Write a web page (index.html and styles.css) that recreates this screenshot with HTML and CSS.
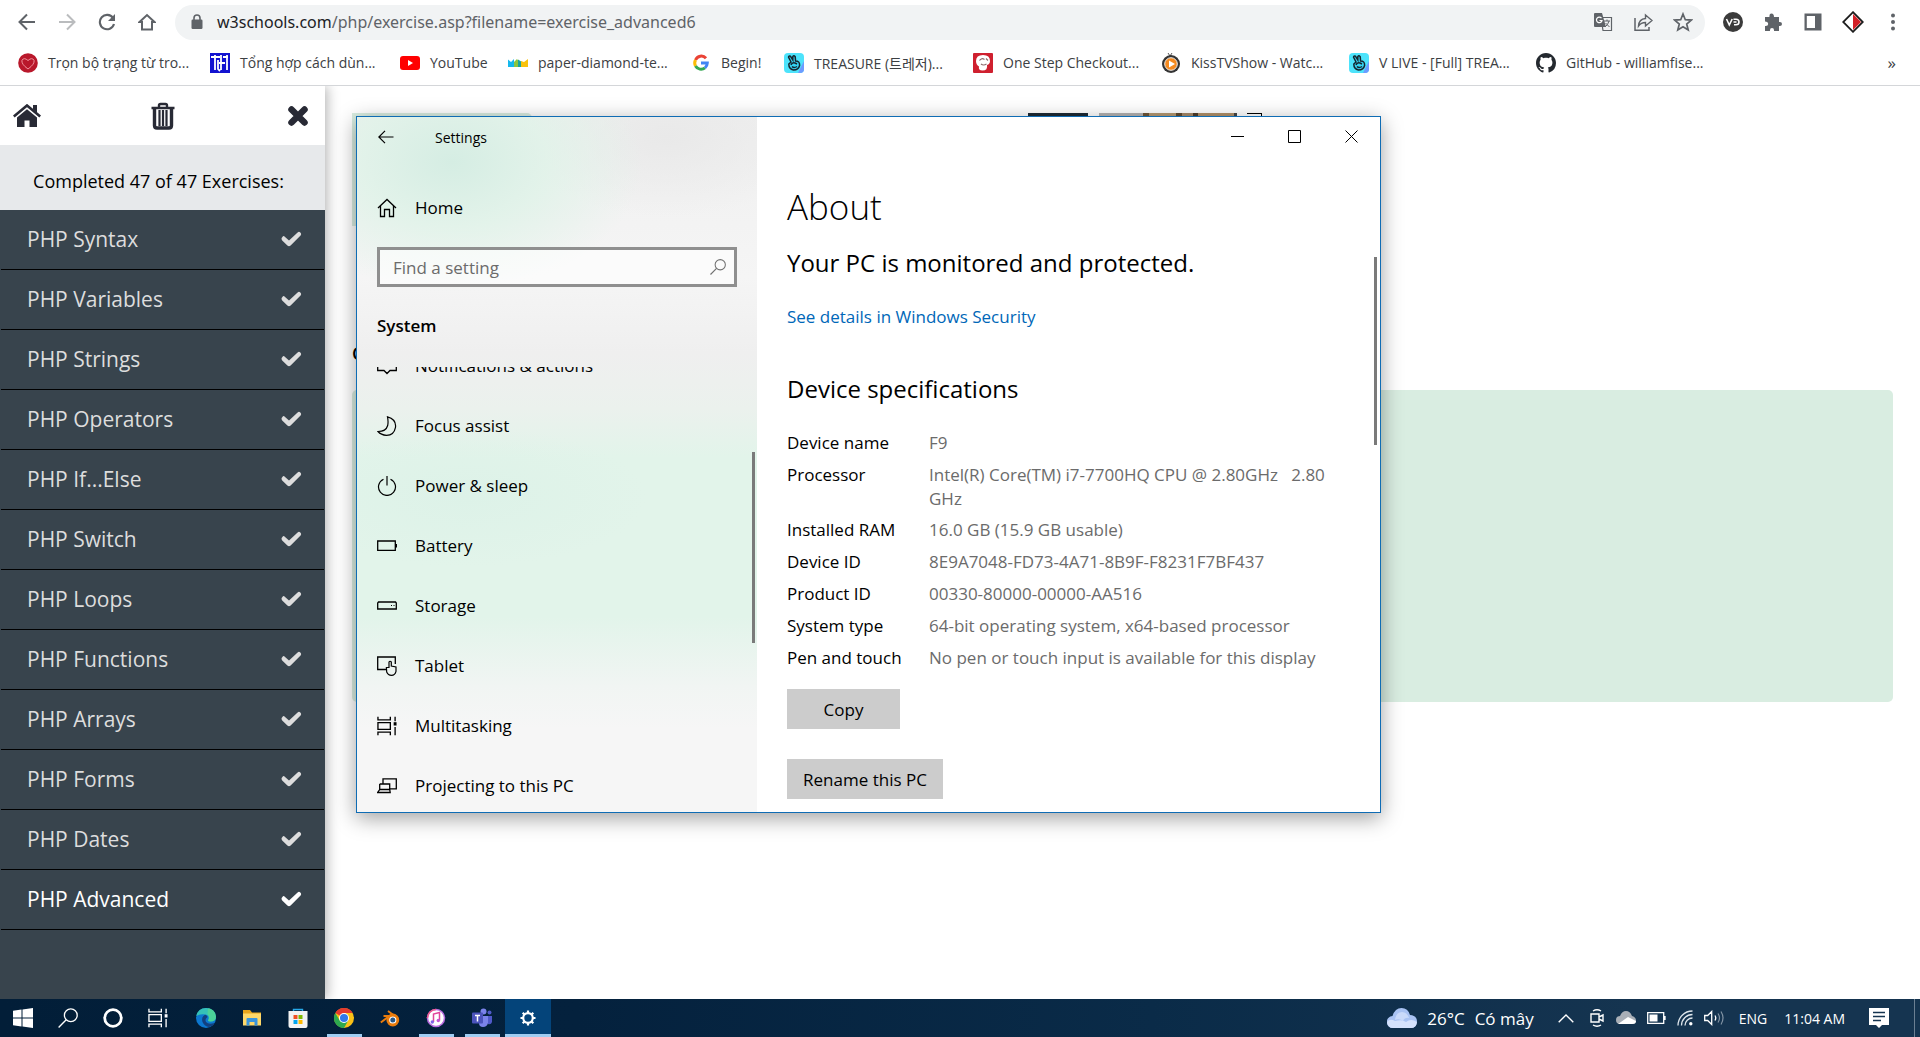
FILE: index.html
```html
<!DOCTYPE html>
<html lang="en">
<head>
<meta charset="utf-8">
<title>PHP Exercises</title>
<link rel="stylesheet" href="styles.css">
</head>
<body>
<svg class="defs" width="0" height="0" aria-hidden="true">
  <symbol id="check" viewBox="0 0 21 16"><path d="M3.2 5.2 8 9.6 16.6 1.4Q18 .2 19.300 1.400Q20.800 3 19.600 4.400L9.600 14.400Q8 16 6.400 14.400L1.200 9.400Q-.2 7.800 1.200 6.200Q2.400 4.600 3.200 5.200Z" fill="currentColor"/></symbol>
  <symbol id="vlive" viewBox="0 0 20 20"><rect width="20" height="20" rx="4" fill="#4de3fb"/><path d="M14 20h2a4 4 0 0 0 4-4V8Z" fill="#6d9bff"/><g fill="#35d4f3" stroke="#15252e" stroke-width="1.500"><path d="M7 9 4.500 4.200Q4.600 2.400 6.400 3.200L8.800 7V3.600Q9.800 1.800 11.200 3.600L11.600 8Q16 8 15.600 12.500Q14.500 17 9.500 17Q4.800 16 4.800 11Z"/><path d="M7 12Q8 9 11 10l2 1M8 13.500q2 2 5 0" fill="none"/></g></symbol>
  <symbol id="taskview" viewBox="0 0 21 20"><path d="M1 0v3.500h13V0M1 20v-3.500h13V20M1 6.500h13v7H1ZM19 0v5M19 11v9" fill="none" stroke="currentColor" stroke-width="1.400"/><rect x="17.500" y="6" width="3" height="3.500" fill="currentColor"/></symbol>
  <symbol id="search" viewBox="0 0 20 20"><circle cx="12.800" cy="7.200" r="6.400" fill="none" stroke="currentColor" stroke-width="1.300"/><path d="M8.200 11.800.6 19.400" stroke="currentColor" stroke-width="1.400"/></symbol>
</svg>

<header class="browser">
  <div class="toolbar">
    <nav class="nav-buttons" aria-label="Navigation">
      <button aria-label="Back"><svg width="18" height="18" viewBox="0 0 18 18"><path d="M17 9H2M9 1.500 1.500 9 9 16.500" fill="none" stroke="#5f6368" stroke-width="2"/></svg></button>
      <button aria-label="Forward"><svg width="18" height="18" viewBox="0 0 18 18"><path d="M1 9h15M9 1.500 16.500 9 9 16.500" fill="none" stroke="#babcbe" stroke-width="2"/></svg></button>
      <button aria-label="Reload"><svg width="18" height="18" viewBox="0 0 18 18"><path d="M15 5A7.200 7.200 0 1 0 16 11" fill="none" stroke="#5f6368" stroke-width="2.100"/><path d="M17 1v7h-7Z" fill="#5f6368"/></svg></button>
      <button aria-label="Home page"><svg width="18" height="18" viewBox="0 0 18 18"><path d="M1.500 9 9 2l7.500 7H14v7.500H4V9Z" fill="none" stroke="#5f6368" stroke-width="2"/></svg></button>
    </nav>
    <div class="omnibox">
      <svg width="12" height="16" viewBox="0 0 12 16"><path d="M3 6V4a3 3 0 0 1 6 0v2" fill="none" stroke="#5f6368" stroke-width="1.600"/><rect x=".5" y="5.500" width="11" height="9.500" rx="1.200" fill="#5f6368"/></svg>
      <p class="url"><span class="host">w3schools.com</span>/php/exercise.asp?filename=exercise_advanced6</p>
      <button aria-label="Translate"><svg width="20" height="20" viewBox="0 0 20 20"><path d="M8 5.500h10.500v13H10Z" fill="none" stroke="#5f6368" stroke-width="1.200"/><path d="M2 1h7l4 14H2Q1 15 1 14V2Q1 1 2 1Z" fill="#5f6368"/><path d="M8.500 6.200A2.800 2.800 0 1 0 9 8.500H6.500" fill="none" stroke="#fff" stroke-width="1.200"/><path d="M11 9h6M14 7.500V9M16 9q-1 4-4 6M12.500 11l4 4" fill="none" stroke="#5f6368"/></svg></button>
      <button aria-label="Share"><svg width="20" height="20" viewBox="0 0 20 20"><path d="M2 6v12.200h14V15" fill="none" stroke="#5f6368" stroke-width="1.500"/><path d="M5.500 14Q6 7 12.500 6.500V3L19 8.500 12.500 14v-3.500Q8 10.500 5.500 14Z" fill="none" stroke="#5f6368" stroke-width="1.400"/></svg></button>
      <button aria-label="Bookmark this page"><svg width="20" height="20" viewBox="0 0 20 20"><path d="m10 2 2.300 5.700 6 .4-4.600 3.900 1.500 6L10 14.700 4.800 18l1.500-6-4.600-3.900 6-.4Z" fill="none" stroke="#5f6368" stroke-width="1.700"/></svg></button>
    </div>
    <div class="extensions">
      <button aria-label="Video downloader"><svg width="20" height="20" viewBox="0 0 20 20"><circle cx="10" cy="10" r="10" fill="#3b3b3b"/><path d="m3.500 7 2.800 6 2.900-6M10.500 7.200H13q3 0 3 2.800t-3 2.800h-2M10.500 10h3" fill="none" stroke="#fff" stroke-width="1.600"/></svg></button>
      <button aria-label="Extensions"><svg width="20" height="20" viewBox="0 0 20 20"><path d="M2 5h4.500Q6 1.500 8.500 1.500T11 5h5v5q3-.5 3 2t-3 2v5h-5q.3-3-2-3t-2 3H2v-5q3.200.3 3.200-2T2 9.500Z" fill="#5f6368"/></svg></button>
      <button aria-label="Side panel"><svg width="20" height="20" viewBox="0 0 20 20"><path d="M1.500 1.500h17v17h-17ZM3.800 4v12H12V4Z" fill="#5f6368" fill-rule="evenodd"/></svg></button>
      <button aria-label="Profile"><svg width="22" height="22" viewBox="0 0 22 22"><path d="m11 1.200 9.800 9.800-9.800 9.800L1.200 11Z" fill="#fff" stroke="#1c1c1c" stroke-width="1.800"/><path d="m11 3 8 8-8 8Z" fill="#d21f26"/></svg></button>
      <button aria-label="Menu"><svg width="20" height="20" viewBox="0 0 20 20" fill="#5f6368"><circle cx="10" cy="3.500" r="2"/><circle cx="10" cy="10" r="2"/><circle cx="10" cy="16.500" r="2"/></svg></button>
    </div>
  </div>
  <nav class="bookmarks" aria-label="Bookmarks">
    <a href="#"><svg viewBox="0 0 20 20"><circle cx="10" cy="10" r="9.800" fill="#b9182b"/><path d="M10 16Q3 11 4 7.200Q6 4 10 7.500Q14 4 16 7.200Q17 11 10 16Z" fill="none" stroke="#f0929c"/></svg>Trọn bộ trạng từ tro...</a>
    <a href="#"><svg viewBox="0 0 20 20"><rect width="20" height="20" fill="#1212d0"/><path d="M1 4h9M5 2v15M8 7v9l2 2M9 10h6M11 2v15M17 2v15M13 4h5" fill="none" stroke="#fff" stroke-width="1.800"/></svg>Tổng hợp cách dùn...</a>
    <a href="#"><svg viewBox="0 0 20 20"><rect y="3" width="20" height="14" rx="3" fill="#f00"/><path d="m8 7 5 3-5 3Z" fill="#fff"/></svg>YouTube</a>
    <a href="#"><svg viewBox="0 0 20 20"><path d="M0 6.500 3 9l3-3v8H0Z" fill="#15b8ed"/><path d="m6 9 3-3 3 4v4H6Z" fill="#8bc53f"/><path d="M10 6.500 14 9v5h-4Z" fill="#1ba49b"/><path d="m13 8 3 1 4-3v8h-7Z" fill="#f9c20b"/></svg>paper-diamond-te...</a>
    <a href="#"><svg viewBox="0 0 20 20" fill="none" stroke-width="3"><path d="M15 5.200A6.300 6.300 0 0 0 4.500 7" stroke="#ea4335"/><path d="M4.500 7a6.300 6.300 0 0 0 0 6" stroke="#fbbc05"/><path d="M4.500 13A6.300 6.300 0 0 0 14 14.800" stroke="#34a853"/><path d="M10 10h6.300Q16.200 13 14 14.800" stroke="#4285f4"/></svg>Begin!</a>
    <a href="#"><svg viewBox="0 0 20 20"><use href="#vlive"/></svg>TREASURE (트레저)...</a>
    <a href="#"><svg viewBox="0 0 20 20"><rect width="20" height="20" rx="1" fill="#cf202f"/><path d="M3 8Q3 2 10 2t7 6q0 3-3 4 1 5.500-4.500 5.500-4.500 0-3.500-4-3-2-3-5.500Z" fill="#fff"/><path d="M6.500 7.500q2-3 5-1M13 5.500l2 2M8 11q2.500 2 5.500 0" fill="none" stroke="#8c6a6c" stroke-width="1.200"/></svg>One Step Checkout...</a>
    <a href="#"><svg viewBox="0 0 20 20"><path d="m7 0 2 3 2-3" fill="none" stroke="#555"/><circle cx="10" cy="11" r="9" fill="#343434"/><circle cx="10" cy="11" r="6.300" fill="#f58a1f" stroke="#eee"/><path d="m8 7.500 6 3.500-6 3.500Z" fill="#fff"/></svg>KissTVShow - Watc...</a>
    <a href="#"><svg viewBox="0 0 20 20"><use href="#vlive"/></svg>V LIVE - [Full] TREA...</a>
    <a href="#"><svg viewBox="0 0 16 16"><path fill="#24292f" d="M8 0C3.580 0 0 3.580 0 8c0 3.540 2.290 6.530 5.470 7.590.4.070.55-.17.55-.38 0-.19-.01-.82-.01-1.490-2.010.37-2.530-.49-2.690-.94-.09-.23-.48-.94-.82-1.130-.28-.15-.68-.52-.01-.53.63-.01 1.080.58 1.230.82.72 1.210 1.870.87 2.330.66.070-.52.280-.87.510-1.070-1.780-.2-3.640-.89-3.640-3.950 0-.87.310-1.590.82-2.150-.08-.2-.36-1.020.08-2.120 0 0 .67-.21 2.200.82.640-.18 1.320-.27 2-.27s1.360.09 2 .27c1.530-1.040 2.200-.82 2.200-.82.440 1.100.16 1.920.08 2.120.51.560.82 1.270.82 2.150 0 3.070-1.870 3.750-3.650 3.950.29.250.54.730.54 1.480 0 1.070-.01 1.930-.01 2.200 0 .21.150.46.550.38A8.010 8.010 0 0 0 16 8c0-4.420-3.580-8-8-8Z"/></svg>GitHub - williamfise...</a>
    <button class="more" aria-label="More bookmarks">»</button>
  </nav>
</header>

<main class="page">
  <aside class="sidebar">
    <div class="side-tools">
      <button aria-label="Home"><svg width="28" height="24" viewBox="0 0 28 24"><path d="m.8 12.500 13.200-11 13.200 11" fill="none" stroke="#282a35" stroke-width="2.600"/><path d="M20 1h4v8l-4-3.500ZM4 13.500 14 5.200l10 8.300V23h-7.500v-6.500h-5V23H4Z" fill="#282a35"/></svg></button>
      <button aria-label="Reset progress"><svg width="24" height="28" viewBox="0 0 24 28"><path d="M8 5V3.500Q8 2 9.500 2h5Q16 2 16 3.500V5M.5 6h23" fill="none" stroke="#282a35" stroke-width="2.400"/><path d="M3.500 6v17.500Q3.500 26 6 26h12q2.500 0 2.500-2.500V6" fill="none" stroke="#282a35" stroke-width="3.400"/><path d="M8.500 8v16M12 8v16M15.500 8v16" stroke="#282a35" stroke-width="2.200"/></svg></button>
      <button aria-label="Close menu"><svg width="22" height="22" viewBox="0 0 22 22"><path d="m4.500 4.500 13 13M17.500 4.500l-13 13" stroke="#282a35" stroke-width="6.500" stroke-linecap="round"/></svg></button>
    </div>
    <p class="completed">Completed 47 of 47 Exercises:</p>
    <nav class="chapters" aria-label="Exercises">
      <a href="#">PHP Syntax<svg><use href="#check"/></svg></a>
      <a href="#">PHP Variables<svg><use href="#check"/></svg></a>
      <a href="#">PHP Strings<svg><use href="#check"/></svg></a>
      <a href="#">PHP Operators<svg><use href="#check"/></svg></a>
      <a href="#">PHP If...Else<svg><use href="#check"/></svg></a>
      <a href="#">PHP Switch<svg><use href="#check"/></svg></a>
      <a href="#">PHP Loops<svg><use href="#check"/></svg></a>
      <a href="#">PHP Functions<svg><use href="#check"/></svg></a>
      <a href="#">PHP Arrays<svg><use href="#check"/></svg></a>
      <a href="#">PHP Forms<svg><use href="#check"/></svg></a>
      <a href="#">PHP Dates<svg><use href="#check"/></svg></a>
      <a href="#" class="current">PHP Advanced<svg><use href="#check"/></svg></a>
    </nav>
  </aside>
  <section class="exercise">
    <div class="hero">
      <div class="notice"></div>
      <div class="promo"><span class="promo-dark"></span><span class="promo-photo"></span><span class="promo-mark"></span></div>
    </div>
    <h2 class="result-title">C</h2>
    <div class="result"></div>
  </section>
</main>

<section class="window" aria-label="Settings">
  <div class="pane">
    <div class="pane-title">
      <button aria-label="Back"><svg width="16" height="14" viewBox="0 0 16 14"><path d="M15.500 7H1M7 .8.8 7 7 13.200" fill="none" stroke="#000" stroke-width="1.200"/></svg></button>
      <span>Settings</span>
    </div>
    <a class="item home" href="#"><svg viewBox="0 0 20 20"><path d="M1 10 10 1.500 19 10M3.500 8v10.500h4v-7h5v7h4V8" fill="none" stroke="#000" stroke-width="1.300"/></svg>Home</a>
    <label class="find"><input type="text" placeholder="Find a setting" aria-label="Find a setting"><svg width="16" height="16"><use href="#search"/></svg></label>
    <h2 class="group">System</h2>
    <div class="list">
      <nav class="items" aria-label="System settings">
        <a class="item" href="#"><svg viewBox="0 0 20 20"><path d="M.7 2h18.600v12.500H13L10 17.500 7 14.500H.7Z" fill="none" stroke="#000" stroke-width="1.300"/></svg>Notifications &amp; actions</a>
        <a class="item" href="#"><svg viewBox="0 0 20 20"><path d="M10.500.8q9 2.500 8 10.500-1.500 8-9 8Q4 19 1 15.500q8 0 9.700-6 .8-4-.2-8.700Z" fill="none" stroke="#000" stroke-width="1.200"/></svg>Focus assist</a>
        <a class="item" href="#"><svg viewBox="0 0 20 20"><path d="M6.500 3.200a8.500 8.500 0 1 0 7 0M10 0v9.500" fill="none" stroke="#000" stroke-width="1.200"/></svg>Power &amp; sleep</a>
        <a class="item" href="#"><svg viewBox="0 0 20 20"><path d="M.7 5h17.600v9.300H.7ZM19.500 8v3.500" fill="none" stroke="#000" stroke-width="1.300"/></svg>Battery</a>
        <a class="item" href="#"><svg viewBox="0 0 20 20"><path d="M1.500 6h17l.8 1v6H.7V7Z" fill="none" stroke="#000" stroke-width="1.300"/><path d="M14 9h1v1h-1ZM16.500 9h1v1h-1Z"/></svg>Storage</a>
        <a class="item" href="#"><svg viewBox="0 0 20 20"><path d="M9 13.500H.7V1h17.600v7" fill="none" stroke="#000" stroke-width="1.300"/><path d="M12 12V6q1-1.500 2.300 0v4l4.700 1v4.300Q18 19.300 14.500 19.300T9.700 16l-.3-4.500H12" fill="none" stroke="#000" stroke-width="1.200"/></svg>Tablet</a>
        <a class="item" href="#"><svg viewBox="0 0 21 20"><use href="#taskview"/></svg>Multitasking</a>
        <a class="item" href="#"><svg viewBox="0 0 20 20"><path d="M6 8V2.800h13.300v10H12M2.700 8h10v5.500M2.700 8v5.500L.6 16.500h12.600l-.5-3h-10" fill="none" stroke="#000" stroke-width="1.300"/></svg>Projecting to this PC</a>
      </nav>
      <span class="scroll list-scroll"></span>
    </div>
  </div>
  <div class="about">
    <div class="controls">
      <button aria-label="Minimize"><svg width="13" height="13"><path d="M0 6.500h13" stroke="#000"/></svg></button>
      <button aria-label="Maximize"><svg width="13" height="13"><path d="M.5.500h12v12H.5Z" fill="none" stroke="#000"/></svg></button>
      <button aria-label="Close"><svg width="13" height="13"><path d="m.5.500 12 12M12.500.500l-12 12" stroke="#000"/></svg></button>
    </div>
    <div class="about-body">
      <h1>About</h1>
      <h2 class="status">Your PC is monitored and protected.</h2>
      <a class="security" href="#">See details in Windows Security</a>
      <h2 class="specs-title">Device specifications</h2>
      <table class="specs">
        <tr><th scope="row">Device name</th><td>F9</td></tr>
        <tr><th scope="row">Processor</th><td>Intel(R) Core(TM) i7-7700HQ CPU @ 2.80GHz &nbsp; 2.80 GHz</td></tr>
        <tr><th scope="row">Installed RAM</th><td>16.0 GB (15.9 GB usable)</td></tr>
        <tr><th scope="row">Device ID</th><td>8E9A7048-FD73-4A71-8B9F-F8231F7BF437</td></tr>
        <tr><th scope="row">Product ID</th><td>00330-80000-00000-AA516</td></tr>
        <tr><th scope="row">System type</th><td>64-bit operating system, x64-based processor</td></tr>
        <tr><th scope="row">Pen and touch</th><td>No pen or touch input is available for this display</td></tr>
      </table>
      <button class="action copy">Copy</button>
      <button class="action rename">Rename this PC</button>
    </div>
    <span class="scroll about-scroll"></span>
  </div>
</section>

<footer class="taskbar">
  <div class="apps">
    <button aria-label="Start"><svg viewBox="0 0 20 20"><path d="M0 2.800 8.500 1.600v7.900H0ZM9.500 1.500 20 0v9.500H9.500ZM0 10.500h8.500v7.900L0 17.200ZM9.500 10.500H20V20L9.500 18.500Z" fill="#fff"/></svg></button>
    <button aria-label="Search"><svg viewBox="0 0 20 20"><use href="#search"/></svg></button>
    <button aria-label="Cortana"><svg viewBox="0 0 20 20"><circle cx="10" cy="10" r="8.300" fill="none" stroke="#fff" stroke-width="2.800"/></svg></button>
    <button aria-label="Task view"><svg viewBox="0 0 21 20"><use href="#taskview"/></svg></button>
    <button class="app" aria-label="Edge"><svg viewBox="0 0 20 20"><circle cx="10" cy="10" r="10" fill="#0c78d0"/><path d="M.3 8Q2 0 10 0q9 0 10 8.500 0 5-5.500 5-3.500 0-2-2 1-4-3-5Q4 5.500.3 8Z" fill="#35c1b8"/><path d="M12 0.300q7 1 8 8.200 0 5-5.500 5-3.500 0-2-2 1.500-3-1-5.500Z" fill="#55d98a" opacity=".7"/><path d="M9 6.700Q5 9 6.500 14q2 4.500 6.500 5 4-1 5.500-4-6 2-8.500-1-1.500-3 1.500-5Q11 7 9 6.700Z" fill="#12407f"/></svg></button>
    <button class="app" aria-label="File Explorer"><svg viewBox="0 0 20 20"><path d="M1 2h7l2 2.500h9V17H1Z" fill="#e9a51c"/><path d="M1 5.500h18v12H1Z" fill="#ffd869"/><path d="M4.500 17.500V11q0-1 1-1h9q1 0 1 1v6.500h-3V14h-5v3.500Z" fill="#3a95dd"/></svg></button>
    <button class="app" aria-label="Store"><svg viewBox="0 0 20 20"><path d="M5.500 5V1.500h9V5" fill="none" stroke="#27a9e8" stroke-width="1.400"/><path d="M.5 3h19v15q0 2-2 2h-15q-2 0-2-2Z" fill="#f3f3f3"/><path d="M5.500 7h4v4h-4Z" fill="#f25022"/><path d="M10.500 7h4v4h-4Z" fill="#7fba00"/><path d="M5.500 12h4v4h-4Z" fill="#00a4ef"/><path d="M10.500 12h4v4h-4Z" fill="#ffb900"/></svg></button>
    <button class="app running" aria-label="Chrome"><svg viewBox="0 0 20 20"><circle cx="10" cy="10" r="10" fill="#fbc116"/><path d="M10 10 1.300 5A10 10 0 0 1 18.700 5H10Z" fill="#e33b2e"/><path d="M1.300 5A10 10 0 0 0 10 20l4.300-7.500L5.700 12.500Z" fill="#2da94f"/><circle cx="10" cy="10" r="5" fill="#fff"/><circle cx="10" cy="10" r="4" fill="#3079ea"/></svg></button>
    <button class="app" aria-label="Blender"><svg viewBox="0 0 20 20"><path d="m.8 14.500 8.500-6.500H3.500m4.500-5 8 6" fill="none" stroke="#ea7c0c" stroke-width="2"/><circle cx="12.800" cy="12" r="5" fill="#fff" stroke="#ea7c0c" stroke-width="2.800"/><circle cx="12.800" cy="12" r="2.500" fill="#265787"/></svg></button>
    <button class="app running" aria-label="iTunes"><svg viewBox="0 0 20 20"><circle cx="10" cy="10" r="8.500" fill="#fff" stroke="#b76be0" stroke-width="1.500"/><path d="M1.500 10A8.500 8.500 0 0 1 10 1.500" fill="none" stroke="#f25a8b" stroke-width="1.500"/><path d="M7.500 14V6l6-1.500v8" fill="none" stroke="#e0459b" stroke-width="1.500"/><circle cx="6.300" cy="14" r="1.700" fill="#7f63e8"/><circle cx="12.300" cy="12.500" r="1.700" fill="#c355d6"/></svg></button>
    <button class="app running" aria-label="Teams"><svg viewBox="0 0 20 20"><circle cx="11.500" cy="3.500" r="3" fill="#7b83eb"/><circle cx="17.500" cy="4.500" r="2" fill="#5059c9"/><path d="M14 8h6v6q-1 3-4 2Z" fill="#5059c9"/><path d="M7 8h9v7q-1 4-5 4t-4-4Z" fill="#7b83eb"/><rect y="4.500" width="11" height="11" rx="1" fill="#4b53bc"/><path d="M3 7.500h5M5.500 7.500v6" stroke="#fff" stroke-width="1.500"/></svg></button>
    <button class="app running active" aria-label="Settings"><svg viewBox="0 0 20 20"><circle cx="10" cy="10" r="4.800" fill="none" stroke="#fff" stroke-width="2.200"/><path d="M10 2.500v3M10 14.500v3M2.500 10h3M14.500 10h3M4.700 4.700l2 2M13.300 13.300l2 2M4.700 15.300l2-2M13.300 6.700l2-2" stroke="#fff" stroke-width="2.200"/></svg></button>
  </div>
  <div class="tray">
    <button class="weather"><svg width="30" height="20" viewBox="0 0 30 20"><path d="M6 20a6 6 0 0 1-.5-12Q8 0 14.500 0t8.500 7q7 .5 7 6.500T24 20Z" fill="#a9c3f3"/><path d="M8 12Q9 4 15 4q5 0 7 6-4-1-6 3-4-3-8-1Z" fill="#c9dafa"/><path d="M0 14q3-4 8-1 7-2 11 1 5-4 11 0-1 6-6 6H6q-5 0-6-6Z" fill="#d5e2fc"/></svg><span>26°C</span><span>Có mây</span></button>
    <button aria-label="Show hidden icons"><svg width="16" height="9" viewBox="0 0 16 9"><path d="M.7 8.300 8 1l7.300 7.300" fill="none" stroke="#fff" stroke-width="1.400"/></svg></button>
    <div class="indicators">
      <svg width="16" height="18" viewBox="0 0 16 18"><path d="M2 5h8v8H2ZM10 8l4-2v6l-4-2M4 2q4-2.500 8 0M4 16q4 2.500 8 0" fill="none" stroke="#fff" stroke-width="1.400"/></svg>
      <svg width="20" height="14" viewBox="0 0 20 14"><path d="M4 13a4 4 0 0 1 0-8Q6 0 10 0t6 5q4 1 4 4.500T17 13Z" fill="#a9afb7"/><path d="M2 13 12 6l8 4q0 3-4 3Z" fill="#fff"/></svg>
      <svg width="19" height="12" viewBox="0 0 19 12"><path d="M.7.700h16v10.600H.7ZM18 4v4" fill="none" stroke="#fff" stroke-width="1.300"/><path d="M2.500 2.500h8v7h-8Z" fill="#fff"/></svg>
      <svg width="16" height="16" viewBox="0 0 16 16"><g fill="none" stroke="#dfe6ec" stroke-width="1.300"><path d="M1 15.500A14.500 14.500 0 0 1 15.500 1"/><path d="M4.500 15.500a11 11 0 0 1 11-11"/><path d="M8 15.500A7.500 7.500 0 0 1 15.500 8"/></g><circle cx="13.800" cy="13.800" r="1.700" fill="#fff"/></svg>
      <svg width="21" height="16" viewBox="0 0 21 16"><path d="M.7 5.500h3l4-4v13l-4-4h-3ZM11 5.500q1.500 2.500 0 5" fill="none" stroke="#fff" stroke-width="1.300"/><path d="M14 3.500q3 4.500 0 9M17 1.500q4 6.500 0 13" fill="none" stroke="#8394a5" stroke-width="1.200"/></svg>
    </div>
    <span class="lang">ENG</span>
    <time>11:04 AM</time>
    <button class="notes" aria-label="Notifications"><svg width="20" height="20" viewBox="0 0 20 20"><path d="M0 0h20v17h-7l-3 3-3-3H0Z" fill="#fff"/><path d="M4 4.500h12M4 8.500h12M4 12.500h8" stroke="#153450" stroke-width="1.400"/></svg></button>
  </div>
</footer>
</body>
</html>
```
FILE: styles.css
```css
* { box-sizing: border-box; }
body {
  margin: 0;
  height: 100vh;
  display: flex;
  flex-direction: column;
  overflow: hidden;
  background: #fff;
  color: #000;
  font-family: "Open Sans", "Noto Sans", "Noto Sans CJK KR", sans-serif;
  font-size: 17px;
}
h1, h2, p { margin: 0; font-weight: 400; }
a { color: inherit; text-decoration: none; }
button {
  display: flex;
  align-items: center;
  justify-content: center;
  margin: 0;
  padding: 0;
  border: 0;
  background: none;
  color: inherit;
  font: inherit;
}
svg { display: block; flex: none; }
.defs { position: absolute; }

/* Browser chrome */
.browser { position: relative; z-index: 1; height: 86px; border-bottom: 1px solid #d4d6d9; background: #fff; }
.toolbar { display: flex; align-items: center; height: 44px; padding: 0 7px; }
.nav-buttons, .extensions { display: flex; }
.nav-buttons button, .extensions button, .omnibox button { width: 40px; height: 35px; }
.nav-buttons { margin-right: 8px; }
.extensions { margin-left: 8px; }
.omnibox {
  flex: 1;
  display: flex;
  align-items: center;
  height: 35px;
  padding-left: 16px;
  padding-right: 2px;
  border-radius: 18px;
  background: #f1f3f4;
}
.url { flex: 1; margin-left: 14px; font-family: "Noto Sans", sans-serif; font-size: 16px; line-height: 24px; color: #5f6368; }
.host { color: #202124; }
.bookmarks {
  display: grid;
  grid-template-columns: 171px 169px 87px 162px 72px 168px 167px 167px 166px 171px 1fr;
  column-gap: 21px;
  align-items: center;
  height: 37px;
  padding-left: 18px;
  padding-right: 24px;
  font-size: 14px;
  color: #3c4043;
  white-space: nowrap;
}
.bookmarks a { display: flex; align-items: center; gap: 10px; min-width: 0; }
.bookmarks svg { width: 20px; height: 20px; }
.more { justify-self: end; font-size: 17px; }

/* Exercise page */
.page { flex: 1; display: flex; min-height: 0; }
.sidebar {
  flex: none;
  width: 325px;
  background: #38444d;
  box-shadow: 2px 0 12px rgba(0, 0, 0, .3);
}
.side-tools {
  display: flex;
  align-items: center;
  justify-content: space-between;
  height: 59px;
  padding: 0 13px;
  background: #fff;
}
.side-tools button { width: 28px; }
.completed {
  height: 65px;
  padding: 6px 8px 0 0;
  background: #e7e9eb;
  font-size: 18px;
  line-height: 60px;
  text-align: center;
}
.chapters { color: #ddd; font-size: 21px; }
.chapters a {
  display: flex;
  align-items: center;
  justify-content: space-between;
  height: 60px;
  margin: 0 1px;
  padding: 0 22px 2px 26px;
  border-bottom: 1px solid #000;
}
.chapters svg { width: 21px; height: 16px; }
.chapters .current { color: #fff; }
.exercise { flex: 1; padding: 27px 27px 0; }
.hero { display: flex; }
.notice { width: 180px; height: 113px; background: #d9ede1; border-radius: 0 5px 0 0; }
.promo { display: flex; align-items: flex-start; margin-left: 496px; }
.promo-dark { width: 60px; height: 40px; background: #1d2a35; }
.promo-photo { width: 138px; height: 40px; margin-left: 11px; background: linear-gradient(90deg, #b5b3b2 0 32%, #6e5638 32% 36%, #b59973 36% 56%, #604a30 56% 60%, #a5896a 60% 68%, #4d3c2a 68% 72%, #b0906a 72% 98%, #444 98%); }
.promo-mark { width: 15px; height: 30px; margin-left: 10px; border: 1px solid #000; border-left: 0; }
.result-title { margin-top: 112px; height: 52px; font-size: 18px; font-weight: 600; line-height: 30px; }
.result { height: 312px; border-radius: 5px; background: #d9ede1; }

/* Settings window, placed freely on the desktop */
.window {
  position: absolute;
  z-index: 2;
  left: 356px;
  top: 116px;
  display: flex;
  width: 1025px;
  height: 697px;
  border: 1px solid #0f6cb4;
  background: #fff;
  box-shadow: 0 5px 20px rgba(0, 0, 0, .38);
}
.pane {
  flex: none;
  display: flex;
  flex-direction: column;
  width: 400px;
  background:
    radial-gradient(ellipse 190px 130px at 95px 45px, #d5ede3, rgba(223, 243, 232, .8) 50%, transparent),
    radial-gradient(ellipse 150px 80px at 310px 20px, #e9e9e9, transparent),
    radial-gradient(ellipse 180px 70px at 110px 380px, #ddf2e8, transparent),
    linear-gradient(#efefef 0, #f5f5f5 23%, #efefef 34%, #ebf1ed 42%, #e2f4ea 49%, #e2f4ea 72%, #f1f5f3 82%, #f6f6f6 88%);
}
.pane-title { display: flex; align-items: center; height: 40px; padding-left: 21px; font-size: 14px; }
.pane-title button { margin-right: 41px; }
.item { display: flex; align-items: center; gap: 18px; height: 60px; padding-left: 20px; line-height: 24px; }
.item svg { width: 20px; height: 20px; }
.home { margin-top: 21px; }
.find {
  display: flex;
  align-items: center;
  height: 40px;
  margin: 9px 20px 0;
  padding: 0 8px 0 13px;
  border: 3px solid #8f8f8f;
  background: rgba(255, 255, 255, .6);
  color: #707070;
}
.find input { flex: 1; min-width: 0; padding: 0; border: 0; background: none; font: inherit; color: inherit; outline: 0; }
.find input::placeholder { color: #6b6b6b; opacity: 1; }
.group { margin-top: 9px; padding-left: 20px; font-size: 17px; font-weight: 600; line-height: 60px; }
.list { position: relative; flex: 1; min-height: 0; margin-top: 11px; overflow: hidden; }
.items { margin-top: -31px; }
.scroll { position: absolute; width: 3px; background: #7a7a7a; }
.list-scroll { right: 2px; top: 85px; height: 191px; }
.about { position: relative; flex: 1; }
.controls { display: flex; justify-content: flex-end; }
.controls button { width: 57px; height: 38px; }
.about-body { padding: 30px 40px 0 30px; }
.about-body h1 { font-size: 35px; font-weight: 300; line-height: 44px; }
.about-body h2 { font-size: 24px; line-height: 32px; }
.status { margin-top: 18px; }
.security { display: block; margin-top: 26px; line-height: 24px; color: #0067b8; }
.specs-title { margin-top: 44px; }
.specs { width: 100%; margin-top: 22px; border-collapse: collapse; line-height: 24px; text-align: left; }
.specs th, .specs td { padding: 4px 0; vertical-align: top; }
.specs th { width: 142px; font-weight: 400; white-space: nowrap; }
.specs td { padding-bottom: 3px; color: #6b6b6b; }
.action { height: 40px; background: #ccc; }
.copy { width: 113px; margin-top: 15px; }
.rename { width: 156px; margin-top: 30px; }
.about-scroll { right: 3px; top: 140px; height: 188px; }

/* Taskbar */
.taskbar {
  position: relative;
  z-index: 1;
  flex: none;
  display: flex;
  justify-content: space-between;
  height: 38px;
  background: linear-gradient(90deg, #021e38, #04213d 30%, #0a2b48 60%, #153450 85%);
  color: #fff;
}
.apps, .tray, .indicators, .weather { display: flex; align-items: center; }
.apps button { width: 45px; height: 38px; }
.apps .app { width: 46px; padding-top: 3px; border-bottom: 3px solid transparent; }
.apps .app:nth-child(5) { margin-left: 3px; }
.apps svg { width: 20px; height: 20px; }
.apps .running { background: linear-gradient(#9fcdf3, #9fcdf3) center 35px / 35px 3px no-repeat; background-origin: border-box; background-clip: border-box; }
.apps .active { background-color: #04447a; background-size: 46px 3px; }
.tray { padding-right: 5px; font-size: 14px; }
.weather { font-size: 17px; gap: 10px; }
.tray > button + button { margin-left: 24px; }
.indicators { gap: 11px; margin-left: 15px; }
.lang { margin-left: 14px; }
.tray time { margin-left: 17px; }
.tray > .notes { margin-left: 24px; padding-right: 25px; height: 38px; border-right: 1px solid #6b7f92; }
```
